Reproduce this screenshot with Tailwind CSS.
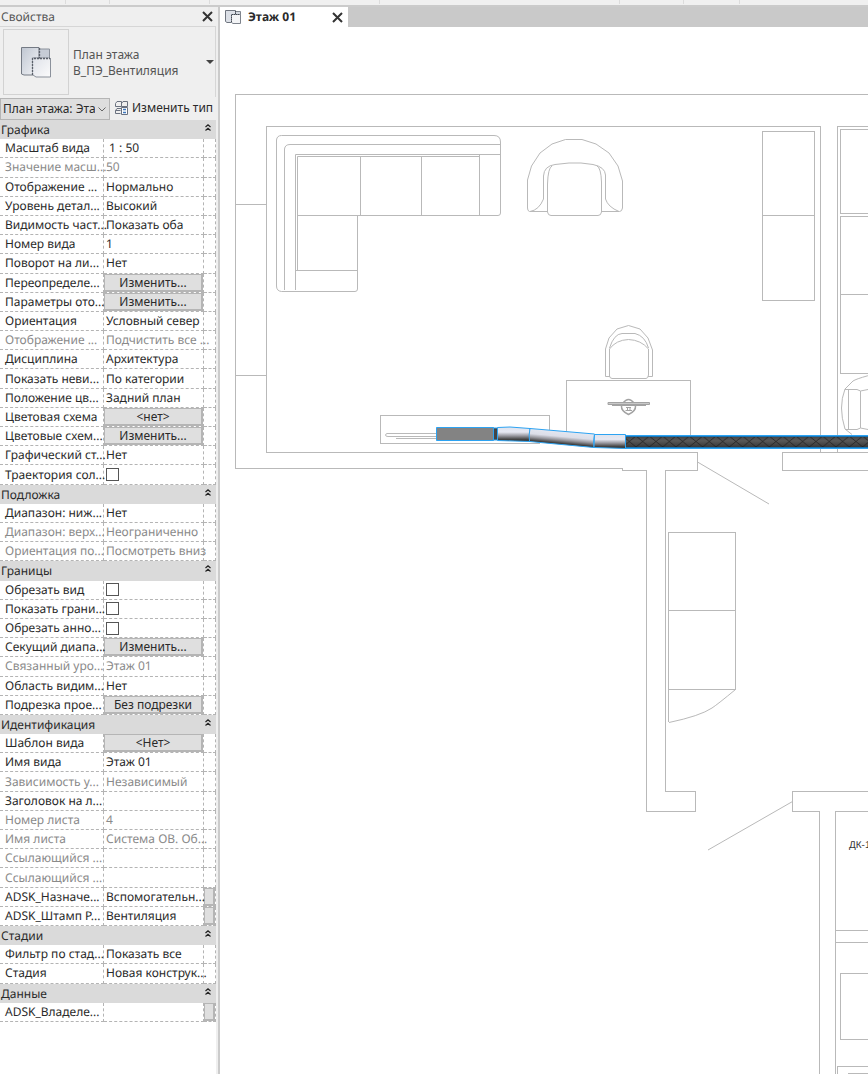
<!DOCTYPE html>
<html lang="ru">
  <head>
    <meta charset="UTF-8" />
    <title>Этаж 01</title>
    <meta name="viewport" content="width=device-width, initial-scale=1.0" />
    <script src="https://cdn.jsdelivr.net/npm/@tailwindcss/browser@4"></script>
  </head>
  <body
    class="min-h-screen flex flex-col bg-white text-[#2a2a2a] text-[12px] leading-[16px] font-['Noto_Sans','Open_Sans',sans-serif] [text-rendering:geometricPrecision]"
  >
    <!-- Ribbon edge -->
    <div class="h-[7px] shrink-0 flex bg-[#f0f0f0] border-b-2 border-[#cbcbcb]">
      <div class="w-[66px] h-1 border-r border-[#dcdcdc]"></div>
      <div class="w-[44px] h-1 border-r border-[#dcdcdc]"></div>
      <div class="w-[100px] h-1 border-r border-[#dcdcdc]"></div>
      <div class="w-[170px] h-1 border-r border-[#dcdcdc]"></div>
      <div class="w-[240px] h-1 border-r border-[#dcdcdc]"></div>
      <div class="w-[64px] h-1 border-r border-[#dcdcdc]"></div>
      <div class="w-[56px] h-1 border-r border-[#dcdcdc]"></div>
    </div>

    <div class="flex flex-1">
      <!-- Properties panel -->
      <aside
        class="w-[220px] shrink-0 flex flex-col bg-[#efefef] border-r-2 border-[#cbcbcb] pr-[2px]"
      >
        <header
          class="h-5 flex items-center justify-between pl-px pr-[3px] border-b border-[#d6d6d6]"
        >
          <h2 class="text-[#555]">Свойства</h2>
          <button type="button" aria-label="Закрыть">
            <svg class="block w-[11px] h-[11px]" viewBox="0 0 11 11" fill="none" stroke="#333" stroke-width="2">
              <path d="M1 1l9 9M10 1l-9 9" />
            </svg>
          </button>
        </header>

        <button
          type="button"
          class="h-[70px] flex items-center text-left pl-[3px] pr-px text-[#555] border-r border-[#d6d6d6]"
        >
          <span
            class="w-[66px] h-[66px] shrink-0 flex items-center justify-center border border-[#d2d2d2]"
          >
            <svg class="w-8 h-8" viewBox="0 0 32 32">
              <defs>
                <linearGradient id="sheet" x1="0" y1="0" x2="1" y2="1">
                  <stop offset="0" stop-color="#bfc6d1" />
                  <stop offset="1" stop-color="#f4f5f8" />
                </linearGradient>
                <linearGradient id="sheet2" x1="0" y1="0" x2="1" y2="1">
                  <stop offset="0" stop-color="#dfe2e9" />
                  <stop offset="1" stop-color="#fbfbfc" />
                </linearGradient>
              </defs>
              <path d="M18 3H29.500V12H18z" fill="#c6ccd6" stroke="#8b919b" />
              <path d="M1.500 1.500H19V12H13V29H4L1.500 28z" fill="url(#sheet)" stroke="#747a84" />
              <path d="M13 12.500H30.500V31H16L13 29z" fill="url(#sheet2)" />
              <path d="M30.500 12V31H16L13 29" fill="none" stroke="#8b919b" />
              <path d="M19.500 2V12.500M12.500 29V12.500H30" fill="none" stroke="#5a606a" stroke-width="1.300" stroke-dasharray="2 1" />
            </svg>
          </span>
          <span class="flex-1 pl-1 pt-[2px] whitespace-nowrap">План этажа<br />В_ПЭ_Вентиляция</span>
          <svg class="w-[8px] h-[4px] shrink-0" viewBox="0 0 8 4"><path d="M0 0h8l-4 4z" fill="#444" /></svg>
        </button>

        <div class="h-[23px] flex items-center">
          <div class="relative w-[110px] shrink-0">
            <select
              aria-label="Вид"
              class="appearance-none block w-full h-[22px] pl-[2px] pr-[14px] bg-[#dedede] border border-[#b5b5b5] whitespace-nowrap"
            >
              <option>План этажа: Эта</option>
            </select>
            <svg class="absolute right-1 top-[9px] w-[8px] h-[5px]" viewBox="0 0 8 5" fill="none" stroke="#666">
              <path d="M.5.500L4 4 7.500.500" />
            </svg>
          </div>
          <button type="button" class="flex items-center gap-1 pl-[5px] pb-[2px] whitespace-nowrap">
            <svg class="w-[13px] h-[14px]" viewBox="0 0 13 14" fill="none" stroke="#6b7280">
              <path d="M.5 2.500L2 .500H6.500V5.500H.500zM6.500 2.500L8 .500H12.500V5.500H6.500M.5 9.500L2 7.500H6M.5 9.500V12.500H5.500M.5 9.500H5.500" />
              <path d="M6.500 6.500H12.500V13.500H6.500z" fill="#fff" />
              <path d="M8 8.500H11M8 11.500H11" stroke="#3f78bd" stroke-width="1.500" />
            </svg>
            Изменить тип
          </button>
        </div>

        <div class="flex-1 bg-white">
          <table id="props" class="w-full h-[902px] table-fixed border-separate border-spacing-0">
            <colgroup>
              <col class="w-[104px]" />
              <col class="w-[100px]" />
              <col class="w-[12px]" />
            </colgroup>
          </table>
        </div>
      </aside>

      <!-- Drawing view -->
      <main class="flex-1 min-w-0 flex flex-col">
        <nav class="h-5 shrink-0 flex bg-[#c9c9c9]">
          <div class="w-[128px] flex items-center bg-white pl-[5px] pr-[5px]">
            <svg class="w-4 h-[14px] mr-[7px]" viewBox="0 0 16 14">
              <path d="M10.500 1.500H15.500V5H10.500z" fill="#d3d8e0" stroke="#7d838c" />
              <path d="M.5.500H10.500V4.500H6.500V12.500H2L.500 11.500z" fill="#dce0e7" stroke="#6f757f" />
              <path d="M6.500 4.500H15.500V13.500H8L6.500 12.500z" fill="#f3f4f6" stroke="#7d838c" />
              <path d="M10.500 1V4.500M6.500 12V4.500H15" fill="none" stroke="#444a53" stroke-dasharray="1 1" />
            </svg>
            <a href="#plan" class="flex-1 font-bold whitespace-nowrap">Этаж 01</a>
            <button type="button" aria-label="Закрыть вид">
              <svg class="block w-[11px] h-[11px]" viewBox="0 0 11 11" fill="none" stroke="#333" stroke-width="2">
                <path d="M1 1l9 9M10 1l-9 9" />
              </svg>
            </button>
          </div>
        </nav>

        <div id="plan" class="relative flex-1">
          <svg
            class="absolute inset-0 w-full h-full"
            viewBox="220 27 648 1047"
            preserveAspectRatio="xMinYMin slice"
            fill="none"
            stroke="#b9b9b9"
          >
            <defs>
              <linearGradient id="duct" x1="0" y1="0" x2="0" y2="1">
                <stop offset="0" stop-color="#dfe3ee" />
                <stop offset=".35" stop-color="#e6e8f2" />
                <stop offset=".6" stop-color="#9b9ba2" />
                <stop offset=".85" stop-color="#444" />
                <stop offset="1" stop-color="#333" />
              </linearGradient>
              <linearGradient id="bend" gradientUnits="userSpaceOnUse" x1="563" y1="431" x2="561.700" y2="445">
                <stop offset="0" stop-color="#e4e8f2" />
                <stop offset=".4" stop-color="#dcdee8" />
                <stop offset=".65" stop-color="#96969c" />
                <stop offset=".9" stop-color="#3c3c3c" />
                <stop offset="1" stop-color="#333" />
              </linearGradient>
              <linearGradient id="sleeve" x1="0" y1="0" x2="0" y2="1">
                <stop offset="0" stop-color="#404040" />
                <stop offset=".4" stop-color="#585858" />
                <stop offset="1" stop-color="#303030" />
              </linearGradient>
              <pattern id="mesh" patternUnits="userSpaceOnUse" x="636" y="436" width="13.330" height="12">
                <path d="M0 0L13.330 11M13.330 0L0 11M0 10V12M13.330 10V12" stroke="#222" stroke-width=".8" />
              </pattern>
            </defs>

            <!-- Walls -->
            <g shape-rendering="crispEdges">
              <path d="M900 94.500H235.500V468.500H622.500V470.500H646.500V811.500H695.500V791.500H665.500V470.500H697.500V452.500H266.500V126.500H820.500V452.500" />
              <path d="M235.500 204.500H266.500M235.500 375.500H266.500" />
              <path d="M900 126.500H837.500V452.500" />
              <path d="M900 452.500H782.500V470.500H900" />
              <path d="M900 791.500H792.500V811.500H819.500V1100M900 811.500H835.500V1100M835.500 930.500H900M835.500 942.500H900" />
            </g>
            <!-- Doors -->
            <path d="M697.500 462L769 504M792.500 801.500L708 850" />

            <!-- Corner sofa -->
            <path d="M281.500 135.500H494Q500.500 135.500 500.500 142V213Q500.500 215.500 498 215.500H357.500V289Q357.500 291.500 355 291.500H281.500Q276.500 291 276.500 286V140Q277 135.500 281.500 135.500z" />
            <path d="M284.500 290V149Q285 144.500 290 144.500H500M295.500 290V154.500H500M297.500 270V156.500H479.500M297.500 215.500H360M295.500 270.500H357.500M360.500 156.500V215M421.500 156.500V215M479.500 155V215" />

            <!-- Armchair -->
            <path d="M529.500 211.500Q527.500 211 527.500 208V180L531.500 166 540 153 552 144 565.500 139.500H582L596 144 609 153 618 166 622.500 181V208Q622 211.500 619.500 211.500H602M547.500 211.500H529.500" />
            <path d="M530 211.500Q539 210 543.500 199V176Q544 166 555 164.500L569 163H581L593 164.500Q605 167 605.500 175V199Q608 207 619 211.500" />
            <path d="M547.500 212V184Q548 168 552 166M601.500 212V182Q601 168 597 166M547.500 212Q548 215.500 551 215.500H598Q601 215.500 601.500 212" />

            <!-- Cabinets -->
            <g shape-rendering="crispEdges">
              <path d="M762.500 131.500H814.500V300.500H762.500zM762.500 215.500H814.500" />
              <path d="M900 129.500H840.500V213.500H900M900 216.500H840.500V373.500H900M840.500 294.500H900" />
              <path d="M668.500 722V532.500H735.500V689.500H668.500M668.500 610.500H735.500" />
              <path d="M900 973.500H840.500V1039.500H900M900 1066.500H837.500V1100M848 1073.500H900" />
            </g>
            <path d="M669 722.500Q700 716 712 708 718 704 735.500 689.500" />

            <!-- Chair -->
            <path d="M610 376.500H605.500V349L609 338 617 329 628.500 325.500 640 329 648 338 652.500 350V376.500H648" />
            <path d="M609.500 348Q614 334 622 333.500H635Q645 336 648.500 348" />
            <path d="M609.500 349Q616 340 628.500 339.500 641 340 648.500 349V375Q648 378.500 646 378.500H612Q609.500 378 609.500 376z" />

            <!-- Desk and low table -->
            <g shape-rendering="crispEdges">
              <path d="M566.500 435V380.500H690.500V436M380.500 443.500V415.500H549.500V430M380.500 443.500H540" />
            </g>
            <path d="M436 433.500H387Q385.500 434 385.500 435 385.500 436.500 388 436.500H436M396 438.500H436" />

            <!-- Monitor -->
            <g stroke="#a3a3a3">
              <path d="M623 403Q628.500 396 634 403M621.500 406Q621 411 628.500 414.500 636 411 635.500 406" stroke-width="1.500" />
              <path d="M608 402.500H649.500V404.500H608zM612 405.500H646" fill="#c9c9c9" />
              <path d="M626 407.500H631M627.500 407V410M630 407V410M625.500 410.500H632" />
            </g>

            <!-- Side chair -->
            <path d="M900 368Q859 377 853 381L845 389Q838 407 845 429L852 434.500M845 389.500H857L860.500 391 868 389.500H900M845 429.500H857L860.500 428 868 429.500H900M848.500 390V429M860.500 391V428" />

            <!-- Duct run -->
            <g stroke="#2da3f2">
              <path d="M493 428H497.500V440H493z" fill="#444" />
              <path d="M436.500 427.500H493.500V440.500H436.500z" fill="#838383" />
              <path d="M497.500 427.500L510 427 530 428.500V441.500L497.500 440.500z" fill="url(#duct)" />
              <path d="M530 428.500L594.500 434Q593 441 594 447.500L529.500 441.500Q528.500 435 530 428.500z" fill="url(#bend)" />
              <path d="M594.500 434.500H625.500V448.500L594 447.500z" fill="url(#duct)" />
              <path d="M625.500 435.500H900V448.500H625.500z" fill="url(#sleeve)" />
            </g>
            <path d="M626 436H900V448H626z" fill="url(#mesh)" stroke="none" />
            <path d="M626 436.500H900M626 447.500H900" stroke="#1873b4" />

            <text x="849" y="848" fill="#333" stroke="none" font-size="10" font-family="Liberation Sans, sans-serif">ДК-1</text>
          </svg>
        </div>
      </main>
    </div>

    <script>
      // [name, value, kind]; kinds: button, check, off (read only), more (side button)
      const groups = [
        ["Графика", [
          ["Масштаб вида", " 1 : 50"],
          ["Значение масш...", "50", "off"],
          ["Отображение ...", "Нормально"],
          ["Уровень детал...", "Высокий"],
          ["Видимость част...", "Показать оба"],
          ["Номер вида", "1"],
          ["Поворот на ли...", "Нет"],
          ["Переопределе...", "Изменить...", "button"],
          ["Параметры ото...", "Изменить...", "button"],
          ["Ориентация", "Условный север"],
          ["Отображение ...", "Подчистить все ...", "off"],
          ["Дисциплина", "Архитектура"],
          ["Показать неви...", "По категории"],
          ["Положение цв...", "Задний план"],
          ["Цветовая схема", "<нет>", "button"],
          ["Цветовые схем...", "Изменить...", "button"],
          ["Графический ст...", "Нет"],
          ["Траектория сол...", "", "check"],
        ]],
        ["Подложка", [
          ["Диапазон: ниж...", "Нет"],
          ["Диапазон: верх...", "Неограниченно", "off"],
          ["Ориентация по...", "Посмотреть вниз", "off"],
        ]],
        ["Границы", [
          ["Обрезать вид", "", "check"],
          ["Показать грани...", "", "check"],
          ["Обрезать анно...", "", "check"],
          ["Секущий диапа...", "Изменить...", "button"],
          ["Связанный уро...", "Этаж 01", "off"],
          ["Область видим...", "Нет"],
          ["Подрезка прое...", "Без подрезки", "button"],
        ]],
        ["Идентификация", [
          ["Шаблон вида", "<Нет>", "button"],
          ["Имя вида", "Этаж 01"],
          ["Зависимость у...", "Независимый", "off"],
          ["Заголовок на л...", ""],
          ["Номер листа", "4", "off"],
          ["Имя листа", "Система ОВ. Об...", "off"],
          ["Ссылающийся ...", "", "off"],
          ["Ссылающийся ...", "", "off"],
          ["ADSK_Назначе...", "Вспомогательн...", "more"],
          ["ADSK_Штамп Р...", "Вентиляция", "more"],
        ]],
        ["Стадии", [
          ["Фильтр по стад...", "Показать все"],
          ["Стадия", "Новая конструк..."],
        ]],
        ["Данные", [["ADSK_Владеле...", "", "more"]]],
      ];

      const table = document.getElementById("props");
      const cell = "p-0 border-b border-r border-dashed border-[#b4b4b4] ";
      const esc = (s) => s.replace("<", "&lt;").replace(">", "&gt;");

      function renderValue(value, kind, id) {
        if (kind === "button")
          return `<button type="button" aria-describedby="${id}" class="block w-full h-[18px] leading-[16px] bg-[#dfdfdf] border border-[#b5b5b5] border-r-2 border-b-2">${esc(value)}</button>`;
        if (kind === "check")
          return `<input type="checkbox" id="${id}-box" class="appearance-none block ml-[2px] size-[13px] border border-[#555] bg-white" />`;
        return `<div class="pl-[2px] h-[18px] leading-[18px] whitespace-pre">${value}</div>`;
      }

      let n = 0;
      for (const [title, rows] of groups) {
        const body = document.createElement("tbody");
        let html = `<tr><th colspan="3" scope="rowgroup" class="p-0 bg-[#dadada] font-normal text-left"><div class="h-[19px] leading-[19px] flex items-start justify-between pl-px pr-[5px]">${title}
          <button type="button" aria-label="Свернуть ${title}" class="pt-1"><svg class="block w-[6px] h-[7px]" viewBox="0 0 6 7" fill="none" stroke="#222" stroke-width="1.200"><path d="M.5 3L3 .800l2.500 2.200M.5 6.500L3 4.300l2.500 2.200" /></svg></button></div></th></tr>`;
        for (const [name, value, kind] of rows) {
          const id = "p" + n++;
          const label = kind === "check" ? `<label for="${id}-box">${name}</label>` : name;
          const side = kind === "more"
            ? `<button type="button" aria-label="Выбрать: ${name}" class="block w-full h-[18px] bg-[#dfdfdf] border border-[#b5b5b5] border-r-2 border-b-2"></button>`
            : "";
          html += `<tr class="${kind === "off" ? "text-[#8a8a8a]" : "text-[#2a2a2a]"}">
            <th scope="row" id="${id}" class="${cell} font-normal text-left"><div class="pl-[5px] h-[18px] leading-[18px] whitespace-nowrap">${label}</div></th>
            <td class="${cell}">${renderValue(value, kind, id)}</td>
            <td class="${cell}">${side}</td></tr>`;
        }
        body.innerHTML = html;
        table.append(body);
      }
    </script>
  </body>
</html>
